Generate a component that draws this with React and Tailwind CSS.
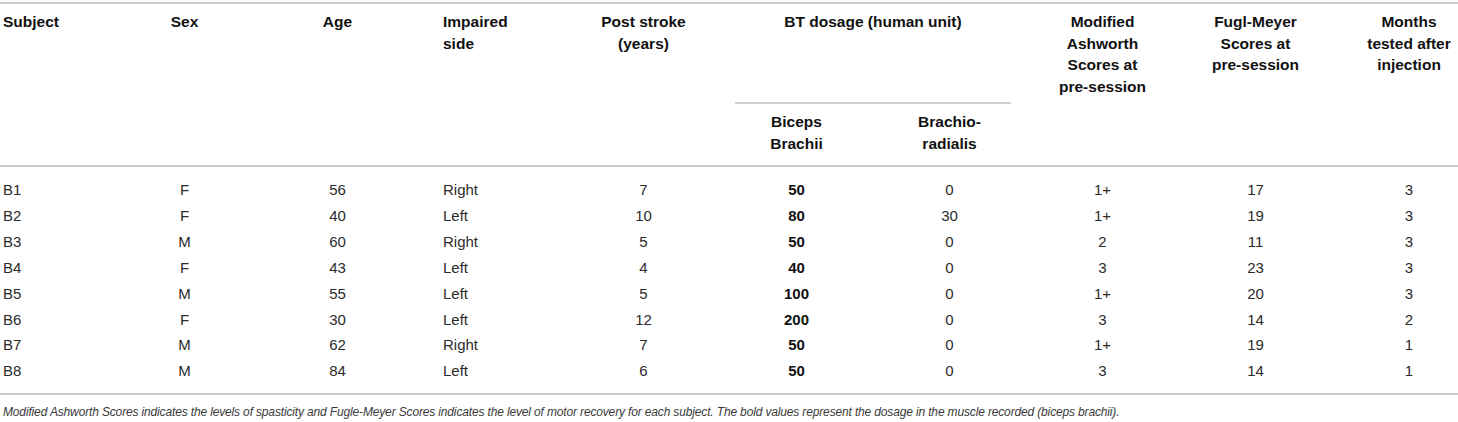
import React from 'react';

const rows = [
    ['B1', 'F', '56', 'Right', '7', '50', '0', '1+', '17', '3'],
    ['B2', 'F', '40', 'Left', '10', '80', '30', '1+', '19', '3'],
    ['B3', 'M', '60', 'Right', '5', '50', '0', '2', '11', '3'],
    ['B4', 'F', '43', 'Left', '4', '40', '0', '3', '23', '3'],
    ['B5', 'M', '55', 'Left', '5', '100', '0', '1+', '20', '3'],
    ['B6', 'F', '30', 'Left', '12', '200', '0', '3', '14', '2'],
    ['B7', 'M', '62', 'Right', '7', '50', '0', '1+', '19', '1'],
    ['B8', 'M', '84', 'Left', '6', '50', '0', '3', '14', '1'],
];

const cols = 'grid grid-cols-[108px_153px_153px_153px_153px_153px_153px_153px_153px_126px]';

const App = () => {
    return (
        <div className="w-[1458px] h-[422px] bg-white pt-[2px] overflow-hidden font-['Liberation_Sans',Arial,sans-serif]">
            {/* header */}
            <div className={`${cols} grid-rows-[100px_61px] border-t-2 border-b-2 border-[#cbcbcb] text-[15.5px] leading-[21.7px] font-bold text-[#111]`}>
                <div className="row-span-2 pt-[7px] pl-[3px]">Subject</div>
                <div className="row-span-2 pt-[7px] text-center">Sex</div>
                <div className="row-span-2 pt-[7px] text-center">Age</div>
                <div className="row-span-2 pt-[7px] pl-[29px]">Impaired<br />side</div>
                <div className="row-span-2 pt-[7px] text-center">Post stroke<br />(years)</div>
                <div className="col-span-2 px-[15px]">
                    <div className="h-full pt-[7px] text-center border-b-2 border-[#d2d2d2]">BT dosage (human unit)</div>
                </div>
                <div className="row-span-2 pt-[7px] text-center">Modified<br />Ashworth<br />Scores at<br />pre-session</div>
                <div className="row-span-2 pt-[7px] text-center">Fugl-Meyer<br />Scores at<br />pre-session</div>
                <div className="row-span-2 pt-[7px] pl-[28px] text-center">Months<br />tested after<br />injection</div>
                <div className="pt-[7px] text-center">Biceps<br />Brachii</div>
                <div className="pt-[7px] text-center">Brachio-<br />radialis</div>
            </div>

            {/* body */}
            <div className="pt-[10px] pb-[9px] border-b-2 border-[#cbcbcb] text-[15px] leading-[25.9px] text-[#2b2b2b]">
                {rows.map((r) => (
                    <div key={r[0]} className={cols}>
                        <div className="pl-[3px]">{r[0]}</div>
                        <div className="text-center">{r[1]}</div>
                        <div className="text-center">{r[2]}</div>
                        <div className="pl-[29px]">{r[3]}</div>
                        <div className="text-center">{r[4]}</div>
                        <div className="text-center font-bold text-[#111]">{r[5]}</div>
                        <div className="text-center">{r[6]}</div>
                        <div className="text-center">{r[7]}</div>
                        <div className="text-center">{r[8]}</div>
                        <div className="pl-[28px] text-center">{r[9]}</div>
                    </div>
                ))}
            </div>

            <p className="pt-[8px] pl-[3px] text-[12px] leading-[18px] italic text-[#3a3a3a] tracking-[-0.15px]">
                Modified Ashworth Scores indicates the levels of spasticity and Fugle-Meyer Scores indicates the level of motor recovery for each subject. The bold values represent the dosage in the muscle recorded (biceps brachii).
            </p>
        </div>
    );
};

export default App;
